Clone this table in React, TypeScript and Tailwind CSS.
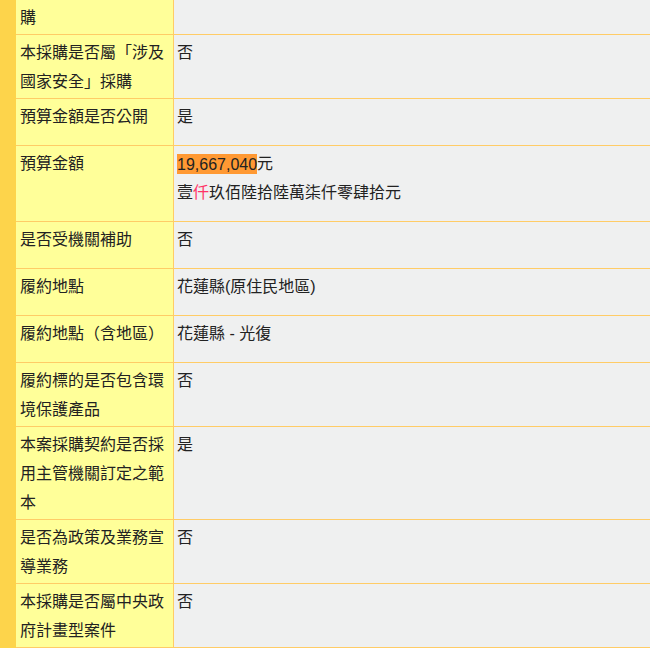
const ROWS: { label: string; value: React.ReactNode }[] = [
  { label: "本採購是否屬「涉及國家安全」採購", value: "否" },
  { label: "預算金額是否公開", value: "是" },
  {
    label: "預算金額",
    value: (
      <>
        <span className="bg-[#FF9933] py-[1.5px]">19,667,040</span>元
        <br />
        壹<span className="text-[#FF3366]">仟</span>玖佰陸拾陸萬柒仟零肆拾元
      </>
    ),
  },
  { label: "是否受機關補助", value: "否" },
  { label: "履約地點", value: "花蓮縣(原住民地區)" },
  { label: "履約地點（含地區）", value: "花蓮縣 - 光復" },
  { label: "履約標的是否包含環境保護產品", value: "否" },
  { label: "本案採購契約是否採用主管機關訂定之範本", value: "是" },
  { label: "是否為政策及業務宣導業務", value: "否" },
  { label: "本採購是否屬中央政府計畫型案件", value: "否" },
];

export default function App() {
  return (
    <div
      className="min-h-screen bg-white text-[16px] leading-[29px] text-[#222]"
      style={{ fontFamily: '"Liberation Sans", "Noto Sans CJK TC", sans-serif' }}
    >
      <div className="flex">
        {/* 左側色條 */}
        <div className="w-4 shrink-0 bg-[#FDD44B]" />
        <div className="flex-1 flex flex-col">
          {/* 上一列的結尾 */}
          <div className="flex border-b border-[#FFCC66]">
            <div className="w-[158px] shrink-0 bg-[#FFFF99] border-r border-[#FFCC66] pl-[4px] pr-[6px] pt-[3px] pb-[2px]">
              購
            </div>
            <div className="flex-1 bg-[#EFF0F0]" />
          </div>
          {ROWS.map((row, i) => (
            <div key={i} className="flex border-b border-[#FFCC66]">
              <div className="w-[158px] shrink-0 bg-[#FFFF99] border-r border-[#FFCC66] pl-[4px] pr-[6px] pt-[3px] pb-[2px]">
                {row.label}
              </div>
              <div className="flex-1 bg-[#EFF0F0] pl-[3px] pt-[3px] pb-[14px]">{row.value}</div>
            </div>
          ))}
        </div>
      </div>
    </div>
  );
}
